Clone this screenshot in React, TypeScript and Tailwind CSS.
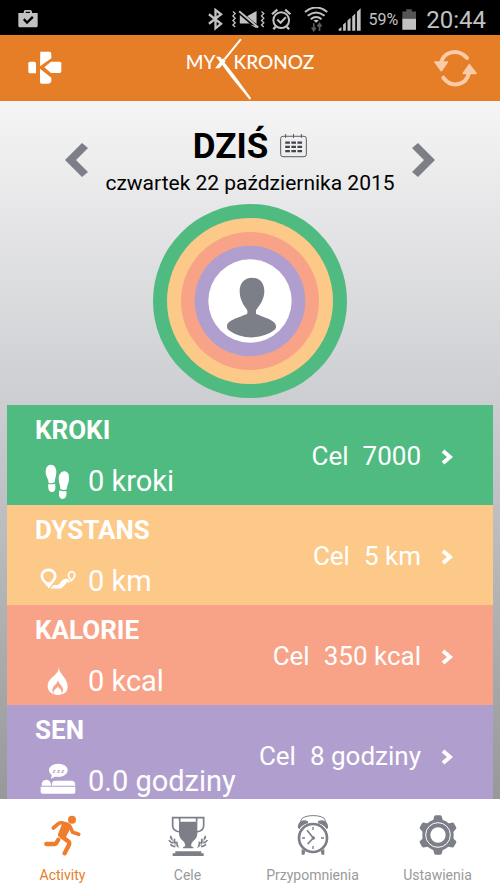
import type { FC, ReactNode } from "react";
import { clsx } from "clsx";

type Metric = {
  name: string;
  value: string;
  goal: string;
  color: string;
  icon: ReactNode;
};

const StepsIcon = () => (
  <svg viewBox="123 172 108 108" className="size-9 fill-white" aria-hidden="true">
    <path d="M154 177c11-1 18 9 18 21 0 13-4 19-5 32-5 3-12 4-18 2 0-12-9-20-9-34 0-11 5-20 14-21z" />
    <path d="M148 235c7 2 14 1 20-1 2 10 3 23-8 25-11 1-14-11-12-24z" />
    <path d="M197 197c10 1 14 10 13 22 0 13-6 19-7 32-6 3-13 2-19-1 0-12-5-19-5-31 0-12 8-23 18-22z" />
    <path d="M181 254c7 3 14 4 21 2 2 12-1 24-12 24-11-1-11-14-9-26z" />
  </svg>
);

const DistanceIcon = () => (
  <svg viewBox="120 168 110 110" className="size-9" aria-hidden="true">
    <path
      d="M147 239l-17-19c-10-14-1-31 16-31s26 17 16 31z"
      fill="none"
      stroke="white"
      strokeWidth="8"
    />
    <path d="M134 223q12 8 26 0l-13 22z" fill="white" />
    <path
      d="M216 222l-7-10c-5-9 0-17 8-17s12 8 7 17z"
      fill="none"
      stroke="white"
      strokeWidth="5"
    />
    <path d="M161 235h12q4 0 7-4l8-10q4-5 10-5h7l8 11h-10l-13 14q-4 5-10 5h-28z" fill="white" />
  </svg>
);

const FlameIcon = () => (
  <svg viewBox="123 461 108 108" className="size-9" aria-hidden="true">
    <path
      fill="white"
      d="M179 473c2 24 27 32 27 59 0 15-10 24-30 24-19 0-30-10-30-26 0-27 34-30 33-57z"
    />
    <path
      className="fill-[#f8a387]"
      d="M177 511c1 13 15 17 15 31 0 7-4 14-15 14s-17-6-17-14c0-14 15-16 17-31z"
    />
    <path fill="white" d="M177 530c1 7 11 10 11 18 0 6-4 9-12 9s-12-3-12-9c0-8 11-10 13-18z" />
  </svg>
);

const SleepIcon = () => (
  <svg viewBox="122 184 108 108" className="size-9" aria-hidden="true">
    <ellipse cx="177" cy="206" rx="28" ry="20" fill="white" />
    <path d="M158 216l-3 15 16-8z" fill="white" />
    <text
      x="177"
      y="213"
      textAnchor="middle"
      className="fill-[#a392c4] font-['Roboto',sans-serif] text-[18px] italic"
    >
      z z z
    </text>
    <path d="M127 252q-1-18 14-18 13 0 15 18z" fill="white" />
    <path d="M158 252q-2-15 9-15h50q11 0 11 15z" fill="white" />
    <path d="M124 255h104v16q0 5-5 5h-94q-5 0-5-5z" fill="white" />
  </svg>
);

const metrics: Metric[] = [
  { name: "KROKI", value: "0 kroki", goal: "7000", color: "bg-[#4fbb80]", icon: <StepsIcon /> },
  { name: "DYSTANS", value: "0 km", goal: "5 km", color: "bg-[#fdc989]", icon: <DistanceIcon /> },
  { name: "KALORIE", value: "0 kcal", goal: "350 kcal", color: "bg-[#f8a387]", icon: <FlameIcon /> },
  { name: "SEN", value: "0.0 godziny", goal: "8 godziny", color: "bg-[#b09fce]", icon: <SleepIcon /> },
];

const RunIcon = () => (
  <svg
    viewBox="130 340 126 126"
    className="h-[42px] w-[42px]"
    fill="none"
    stroke="currentColor"
    strokeLinecap="round"
    strokeLinejoin="round"
    aria-hidden="true"
  >
    <circle cx="220" cy="357" r="12" fill="currentColor" stroke="none" />
    <path d="M164 382l15-13q5-4 13-2l14 4q8 3 11 12l5 12 18 6" strokeWidth="11" />
    <path d="M195 373l15 8-14 28-13-6z" fill="currentColor" strokeWidth="11" />
    <path d="M190 408l20 15q3 4 1 9l-13 26" strokeWidth="13" />
    <path d="M179 417l-6 10q-2 3-6 3h-24" strokeWidth="13" />
  </svg>
);

const TrophyIcon = () => (
  <svg viewBox="499 344 126 126" className="h-[42px] w-[42px]" fill="currentColor" aria-hidden="true">
    <path
      d="M537 398q-21-4-21-18v-25h93v25q0 14-21 18M537 355v12M588 355v12"
      fill="none"
      stroke="currentColor"
      strokeWidth="5"
    />
    <path d="M535 367h55v35q0 14-13 24-6 5-6 14l7 4v3h-31v-3l7-4q0-9-6-14-13-10-13-24z" />
    <path d="M524 456h78v6h7v8h-93v-8h8z" />
    <path
      d="M510 409q0 9 5 11M505 422q4 8 12 9M509 435q6 6 15 7M522 418q-3 9 3 15M529 427q-2 8 3 15M614 409q0 9-5 11M620 422q-4 8-12 9M616 435q-6 6-15 7M603 418q3 9-3 15M596 427q2 8-3 15"
      fill="none"
      stroke="currentColor"
      strokeWidth="5"
    />
    <path
      d="M512 413q5 24 24 32M613 413q-5 24-24 32"
      fill="none"
      stroke="currentColor"
      strokeWidth="2"
    />
  </svg>
);

const ClockIcon = () => (
  <svg
    viewBox="124 342 126 126"
    className="h-[42px] w-[42px]"
    fill="none"
    stroke="currentColor"
    aria-hidden="true"
  >
    <path d="M151 366v-5c3-19 70-19 73 0v5" strokeWidth="3" />
    <path
      d="M142 384c-3-18 15-30 30-20v6q-18 4-26 18zM232 384c3-18-15-30-30-20v6q18 4 26 18z"
      fill="currentColor"
      stroke="none"
    />
    <circle cx="187" cy="414" r="42" strokeWidth="8" />
    <path d="M187 381v9M187 438v9M154 414h9M211 414h9" strokeWidth="4" />
    <path d="M169 391l19 23-17 18" strokeWidth="5" />
    <circle cx="188" cy="414" r="5" fill="currentColor" stroke="none" />
    <path d="M153 447l11 7-3 10h-8zM221 447l-11 7 3 10h8z" fill="currentColor" stroke="none" />
  </svg>
);

const GearIcon = () => (
  <svg viewBox="-63 -63 126 126" className="h-[42px] w-[42px]" fill="currentColor" aria-hidden="true">
    <circle r="47" />
    {[0, 60, 120, 180, 240, 300].map((angle) => (
      <path
        key={angle}
        transform={`rotate(${angle})`}
        d="M-25-36q12-6 13-17 1-6 5-6h14q4 0 5 6 1 11 13 17z"
      />
    ))}
    <circle r="37" fill="none" stroke="white" strokeWidth="3" />
    <circle r="23" fill="white" />
  </svg>
);

const tabs = [
  { label: "Activity", icon: <RunIcon />, active: true },
  { label: "Cele", icon: <TrophyIcon />, active: false },
  { label: "Przypomnienia", icon: <ClockIcon />, active: false },
  { label: "Ustawienia", icon: <GearIcon />, active: false },
];

const StatusBar = () => (
  <div className="flex h-[35px] shrink-0 items-center justify-between bg-black pt-1 pr-[14px] pl-[18px] text-[#c2c2c2]">
    <svg viewBox="54 29 60 60" className="size-5 fill-current" aria-hidden="true">
      <path
        fillRule="evenodd"
        d="M71 38v-3q0-6 6-6h13q6 0 6 6v3h17v38q0 5-5 5H60q-5 0-5-5V38zm6 0h13v-4H77zM69 59l12 13 20-20-5-5-15 15-7-8z"
      />
    </svg>
    <div className="flex items-center">
      {/* bluetooth, muted with vibration, alarm */}
      <svg
        viewBox="615 19 258 70"
        className="h-[23px] w-[86px]"
        fill="none"
        stroke="currentColor"
        aria-hidden="true"
      >
        <path d="M619 38l37 29-17 14V25l17 13-37 29" strokeWidth="7" />
        <path d="M692 30l7 6-7 7 7 7-7 7 7 7-7 7 7 6" strokeWidth="4" />
        <path d="M779 30l7 6-7 7 7 7-7 7 7 7-7 7 7 6" strokeWidth="4" />
        <path d="M713 40l30 26H713z" fill="currentColor" stroke="none" />
        <path d="M735 44l29-16v40z" fill="currentColor" stroke="none" />
        <path d="M744 69l20 12v-7z" fill="currentColor" stroke="none" />
        <path d="M711 29l58 49" strokeWidth="6" />
        <g transform="translate(750 0)">
          <circle cx="89" cy="56" r="24" strokeWidth="6" />
          <path d="M61 38l16-14M117 38l-16-14M72 76l-7 8M106 76l7 8" strokeWidth="7" />
          <path d="M77 54l10 10 16-17" strokeWidth="6" />
        </g>
      </svg>
      <svg
        viewBox="158 16 172 74"
        className="ml-[11px] h-[25px] w-[58px]"
        fill="none"
        stroke="currentColor"
        aria-hidden="true"
      >
        <path d="M161 31q33-27 66 0M169 42q25-20 50 0M178 52q16-13 32 0" strokeWidth="6" />
        <path d="M186 56q8-5 16 0l-8 7z" fill="currentColor" stroke="none" />
        <path d="M187 64v21M181 77l6 9 6-9M204 87V66M198 74l6-9 6 9" className="stroke-[#5a5a5a]" strokeWidth="5" />
        <path
          d="M261 86v-5l8-6v11zM274 86V68l8-7v25zM287 86V56l9-8v38zM301 86V44l9-9v51zM315 86V30l11-10v66z"
          fill="currentColor"
          stroke="none"
        />
      </svg>
      <span className="ml-[7px] text-base leading-6">59%</span>
      <svg viewBox="455 21 43 66" className="ml-1 h-[22px] w-[14px]" aria-hidden="true">
        <path d="M456 50V28h12v-7h17v7h13v22z" className="fill-[#555]" />
        <path d="M456 50h42v34h-42z" fill="currentColor" />
      </svg>
      <span className="ml-[10px] text-2xl leading-6">20:44</span>
    </div>
  </div>
);

const Header = () => (
  <header className="flex h-[66px] shrink-0 items-center justify-between bg-[#e67e28] px-[22px]">
    <button type="button" aria-label="Menu" className="flex w-[45px] justify-center">
      <svg viewBox="83 154 102 102" className="h-[34px] w-[34px] fill-white" aria-hidden="true">
        <path d="M89 186h13q5 0 5 5v30H89q-5 0-5-5v-25q0-5 5-5z" />
        <path d="M120 156h27q6 0 6 7v13l-34 24z" />
        <path d="M132 203l20-17h26q5 0 5 5v24q0 5-5 5h-26z" />
        <path d="M119 207l34 27v8q0 10-9 10h-20q-5 0-5-5z" />
      </svg>
    </button>
    <h1 className="flex h-full items-center font-['Lato',sans-serif] text-[19px] font-medium text-white">
      <span className="pb-3">MY</span>
      <svg viewBox="642 105 108 198" className="-mr-[18px] h-full w-9 fill-white" role="img" aria-label="X">
        <path d="M717 116l5 3-49 61-5-4z" />
        <path d="M645 170h12l45 58 49 67-5 4-55-67z" />
        <path d="M642 205l24-30 8 8-19 22z" />
      </svg>
      <span className="pb-3">KRONOZ</span>
    </h1>
    <button type="button" aria-label="Synchronizuj">
      <svg viewBox="550 140 135 126" className="h-[42px] w-[45px] text-[#f9cba6]" aria-hidden="true">
        <path
          d="M574 188c8-34 50-46 78-15M581 232c26 34 70 22 77-16"
          fill="none"
          stroke="currentColor"
          strokeWidth="12"
          strokeLinecap="round"
        />
        <path
          d="M556 185h37l-18 26zM641 219h38l-20-26z"
          fill="currentColor"
          stroke="currentColor"
          strokeWidth="5"
          strokeLinejoin="round"
        />
      </svg>
    </button>
  </header>
);

const DayPicker = () => (
  <section className="flex items-center justify-between px-16 pt-[27px]">
    <button type="button" aria-label="Poprzedni dzień" className="pb-2">
      <svg viewBox="0 0 24 34" className="h-[34px] w-6 fill-[#7c7f87]" aria-hidden="true">
        <path d="M18 0l6 5-12 12 12 12-6 5L1 17z" />
      </svg>
    </button>
    <div className="flex flex-col items-center text-black">
      <div className="flex items-center gap-3">
        <h2 className="text-[35px] leading-[38px] font-bold">DZIŚ</h2>
        <button type="button" aria-label="Kalendarz" className="pb-1">
          <svg viewBox="681 38 82 74" className="h-[25px] w-[27px]" fill="none" aria-hidden="true">
            <rect x="683" y="47" width="78" height="62" rx="7" stroke="#555962" strokeWidth="3" />
            <path d="M698 40v12M722 40v12M746 40v12" stroke="#555962" strokeWidth="3" />
            <path
              d="M697 66h51M697 79h51M697 92h51"
              stroke="#3f434c"
              strokeWidth="7"
              strokeDasharray="14 4.5"
            />
          </svg>
        </button>
      </div>
      <p className="text-[21px] leading-[34px]">czwartek 22 października 2015</p>
    </div>
    <button type="button" aria-label="Następny dzień" className="pb-2">
      <svg viewBox="0 0 24 34" className="h-[34px] w-6 fill-[#7c7f87]" aria-hidden="true">
        <path d="M6 0L0 5l12 12L0 29l6 5 17-17z" />
      </svg>
    </button>
  </section>
);

const ProgressRings = () => (
  <svg viewBox="39 27 582 582" className="mx-auto mt-1 size-[194px] shrink-0" aria-hidden="true">
    <circle cx="330" cy="318" r="291" className="fill-[#4fbb80]" />
    <circle cx="330" cy="318" r="249" className="fill-[#fdc989]" />
    <circle cx="330" cy="318" r="207" className="fill-[#f8a387]" />
    <circle cx="330" cy="318" r="166" className="fill-[#b09fce]" />
    <circle cx="330" cy="318" r="125" className="fill-white" />
    <path
      className="fill-[#7c7f87]"
      d="M336 248c24 0 37 17 37 40 0 26-14 42-25 58v10c22 11 60 19 60 37 0 7-1 9-5 12-37 29-99 30-137 0-4-3-5-6-5-12 0-18 38-26 61-37v-10c-11-16-23-32-23-58 0-23 14-40 37-40z"
    />
  </svg>
);

const MetricCard: FC<{ metric: Metric }> = ({ metric }) => (
  <button
    type="button"
    className={clsx(
      "flex h-[100px] w-full shrink-0 items-center justify-between pr-10 pl-7 text-left text-white",
      metric.color
    )}
  >
    <span className="flex flex-col gap-[10px]">
      <span className="text-[26px] leading-[42px] font-bold">{metric.name}</span>
      <span className="flex items-center gap-3 pl-[5px] text-[29px] leading-10">
        {metric.icon}
        {metric.value}
      </span>
    </span>
    <span className="flex items-center pt-[3px] text-[26px]">
      <span className="mr-[14px]">Cel</span>
      <span>{metric.goal}</span>
      <svg viewBox="0 0 12 16" className="ml-5 h-4 w-3" fill="none" aria-hidden="true">
        <path d="M2 2l7 6-7 6" stroke="white" strokeWidth="4" />
      </svg>
    </span>
  </button>
);

const TabBar = () => (
  <nav className="grid h-[89px] shrink-0 grid-cols-4 bg-white">
    {tabs.map((tab) => (
      <a
        key={tab.label}
        href="#"
        aria-current={tab.active ? "page" : undefined}
        className={clsx(
          "flex flex-col items-center pt-[15px]",
          tab.active ? "text-[#f07d2c]" : "text-[#7c7f87]"
        )}
      >
        {tab.icon}
        <span
          className={clsx(
            "mt-[9px] text-[14px] leading-5",
            tab.active ? "text-[#e67e28]" : "text-[#9a9a9a]"
          )}
        >
          {tab.label}
        </span>
      </a>
    ))}
  </nav>
);

const App = () => {
  return (
    <div className="flex h-screen flex-col overflow-hidden font-['Roboto',sans-serif]">
      <StatusBar />
      <Header />
      <main className="flex min-h-0 flex-1 flex-col overflow-hidden bg-linear-to-b from-[#f5f5f5] via-[#cbccd0] via-45% to-[#969899]">
        <DayPicker />
        <ProgressRings />
        <div className="mt-[7px] px-[7px]">
          {metrics.map((metric) => (
            <MetricCard key={metric.name} metric={metric} />
          ))}
        </div>
      </main>
      <TabBar />
    </div>
  );
};

export default App;
